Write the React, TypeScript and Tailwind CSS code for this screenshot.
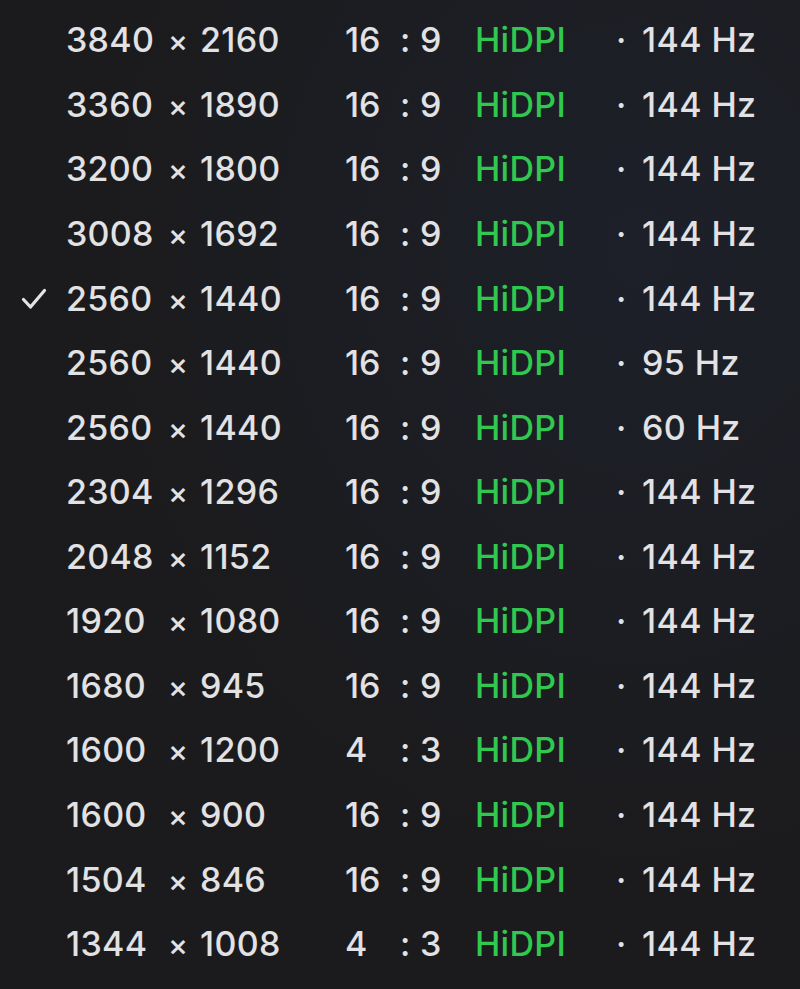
const modes = [
  { w: '3840', h: '2160', ratio: ['16', '9'], hz: '144 Hz' },
  { w: '3360', h: '1890', ratio: ['16', '9'], hz: '144 Hz' },
  { w: '3200', h: '1800', ratio: ['16', '9'], hz: '144 Hz' },
  { w: '3008', h: '1692', ratio: ['16', '9'], hz: '144 Hz' },
  { w: '2560', h: '1440', ratio: ['16', '9'], hz: '144 Hz', selected: true },
  { w: '2560', h: '1440', ratio: ['16', '9'], hz: '95 Hz' },
  { w: '2560', h: '1440', ratio: ['16', '9'], hz: '60 Hz' },
  { w: '2304', h: '1296', ratio: ['16', '9'], hz: '144 Hz' },
  { w: '2048', h: '1152', ratio: ['16', '9'], hz: '144 Hz' },
  { w: '1920', h: '1080', ratio: ['16', '9'], hz: '144 Hz' },
  { w: '1680', h: '945', ratio: ['16', '9'], hz: '144 Hz' },
  { w: '1600', h: '1200', ratio: ['4', '3'], hz: '144 Hz' },
  { w: '1600', h: '900', ratio: ['16', '9'], hz: '144 Hz' },
  { w: '1504', h: '846', ratio: ['16', '9'], hz: '144 Hz' },
  { w: '1344', h: '1008', ratio: ['4', '3'], hz: '144 Hz' },
];

function Check() {
  return (
    <svg width="26" height="22" viewBox="0 0 26 22" fill="none">
      <path d="M2.5 11.5 L9.5 19 L23.5 2.5" stroke="#e4e4e6" strokeWidth="3.2" strokeLinecap="round" strokeLinejoin="round" />
    </svg>
  );
}

export default function App() {
  return (
    <div
      className="w-[800px] h-[989px] overflow-hidden bg-[#1b1b1d] bg-[radial-gradient(ellipse_at_80%_25%,#1d2029_0%,#1b1b1d_60%)] pt-[8px] text-[#e2e2e4] text-[34px] font-medium leading-none"
      style={{ fontFamily: 'Inter, "Liberation Sans", sans-serif' }}
    >
      {modes.map((m, i) => (
        <div key={i} className="flex items-center h-[64.57px]">
          <span className="w-[66px] flex justify-center pl-[1px]">
            {m.selected && <Check />}
          </span>
          <span className="w-[102px] tracking-[0.3px]">{m.w}</span>
          <span className="w-[177px] tracking-[0.3px]">
            <span className="inline-block w-[32px] text-[30px]">×</span>
            {m.h}
          </span>
          <span className="w-[55px]">{m.ratio[0]}</span>
          <span className="w-[75px]">
            <span className="inline-block w-[20px]">:</span>
            {m.ratio[1]}
          </span>
          <span className="w-[141px] text-[#30c84f] tracking-[0.3px]">HiDPI</span>
          <span className="w-[26px]">·</span>
          <span className="tracking-[0.4px]">{m.hz}</span>
        </div>
      ))}
    </div>
  );
}
